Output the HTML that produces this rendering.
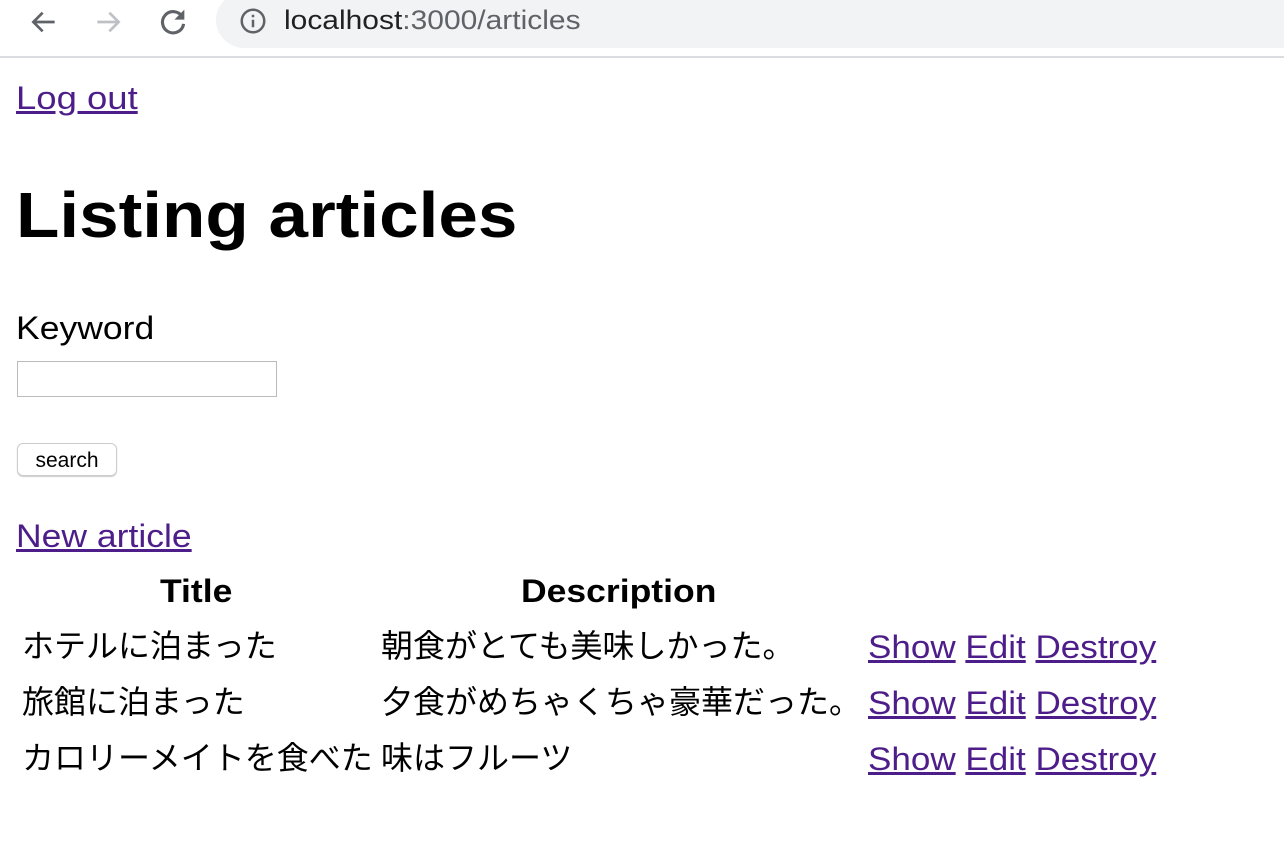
<!DOCTYPE html>
<html><head><meta charset="utf-8"><style>
body{margin:0;width:1284px;height:852px;background:#fff;position:relative;overflow:hidden;font-family:"Liberation Sans","Noto Sans CJK JP",sans-serif;color:#000}
.a{position:absolute;white-space:nowrap;font-size:32px;line-height:40px}
.s{transform-origin:left top;transform:scaleX(1.11)}
a{color:#4d1d8a;text-decoration:underline}
.bar{position:absolute;left:0;top:0;width:1284px;height:56px;background:#fff;border-bottom:2px solid #dadce0}
.url{position:absolute;left:216px;top:-8px;width:1100px;height:56px;background:#f1f3f4;border-radius:28px}
</style></head><body>
<div class="bar">
<svg style="position:absolute;left:28px;top:6px" width="32" height="32" viewBox="0 0 24 24"><path d="M20 12H5M11 5l-7 7 7 7" stroke="#5f6368" stroke-width="2" fill="none"/></svg>
<svg style="position:absolute;left:92px;top:6px" width="32" height="32" viewBox="0 0 24 24"><path d="M4 12h15M13 5l7 7-7 7" stroke="#bdc1c6" stroke-width="2" fill="none"/></svg>
<svg style="position:absolute;left:156px;top:4px" width="34" height="34" viewBox="0 0 24 24"><path d="M18.5 9A7.5 7.5 0 1 0 19.5 14" stroke="#5f6368" stroke-width="2.2" fill="none"/><path d="M20 4v7h-7z" fill="#5f6368"/></svg>
<div class="url"></div>
<svg style="position:absolute;left:238px;top:6px" width="30" height="30" viewBox="0 0 24 24"><circle cx="12" cy="12" r="9" stroke="#5f6368" stroke-width="2" fill="none"/><path d="M12 11v6M12 7v2" stroke="#5f6368" stroke-width="2"/></svg>
<div class="a s" style="left:284px;top:0px;font-size:27px;color:#202124">localhost<span style="color:#5f6368">:3000/articles</span></div>
</div>
<div class="a" style="left:16px;top:78px;transform-origin:left top;transform:scaleX(1.14)"><a>Log out</a></div>
<div class="a s" style="left:16px;top:177px;font-size:64px;line-height:76px;font-weight:bold">Listing articles</div>
<div class="a s" style="left:16px;top:308px">Keyword</div>
<div style="position:absolute;left:17px;top:361px;width:258px;height:34px;border:1px solid #bbb"></div>
<div style="position:absolute;left:17px;top:443px;width:98px;height:31px;border:1px solid #ccc;border-radius:6px;box-shadow:0 1px 1px #ccc;font-size:21px;line-height:33px;text-align:center">search</div>
<div class="a s" style="left:16px;top:516px"><a>New article</a></div>
<div class="a s" style="left:160px;top:571px;font-weight:bold">Title</div>
<div class="a s" style="left:521px;top:571px;font-weight:bold">Description</div>
<div class="a" style="left:22px;top:626px">ホテルに泊まった</div>
<div class="a" style="left:381px;top:626px">朝食がとても美味しかった。</div>
<div class="a s" style="left:868px;top:627px;transform:scaleX(1.095)"><a>Show</a> <a>Edit</a> <a>Destroy</a></div>
<div class="a" style="left:22px;top:682px">旅館に泊まった</div>
<div class="a" style="left:381px;top:682px">夕食がめちゃくちゃ豪華だった。</div>
<div class="a s" style="left:868px;top:683px;transform:scaleX(1.095)"><a>Show</a> <a>Edit</a> <a>Destroy</a></div>
<div class="a" style="left:22px;top:738px">カロリーメイトを食べた</div>
<div class="a" style="left:381px;top:738px">味はフルーツ</div>
<div class="a s" style="left:868px;top:739px;transform:scaleX(1.095)"><a>Show</a> <a>Edit</a> <a>Destroy</a></div>
</body></html>
